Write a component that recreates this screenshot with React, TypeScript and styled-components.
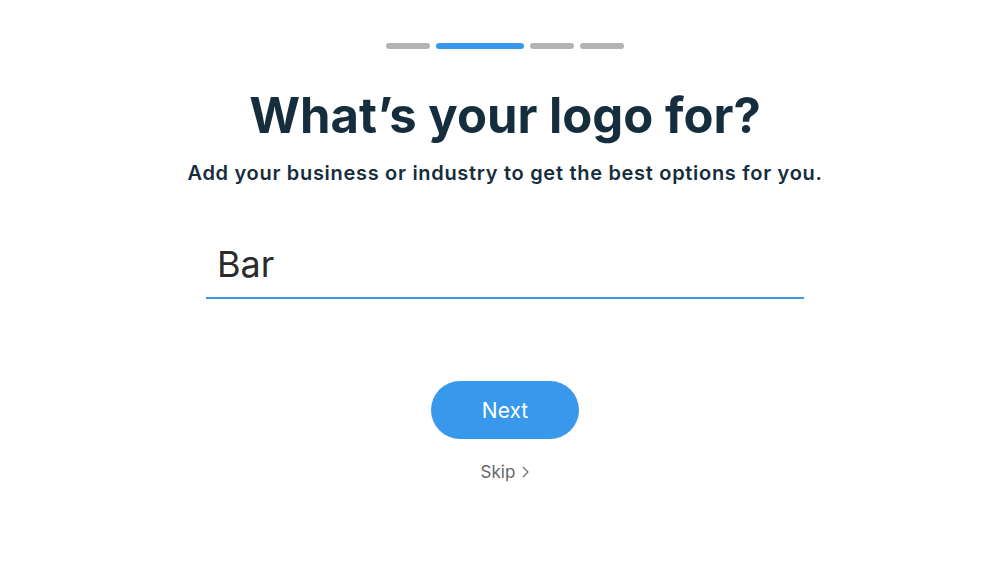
import React, {useState} from 'react'
import styled, {createGlobalStyle} from 'styled-components'

const GlobalStyle = createGlobalStyle`
  html, body {
    margin: 0;
    padding: 0;
    background: #ffffff;
  }
  body {
    font-family: Inter, 'Noto Sans', sans-serif;
  }
`

const Page = styled.div`
  width: 1000px;
  height: 563px;
  display: flex;
  flex-direction: column;
  align-items: center;
  padding: 43px 0 0 10px;
  box-sizing: border-box;
`

const Progress = styled.div`
  display: flex;
  gap: 6px;
`

const Step = styled.div<{$active?: boolean}>`
  width: ${(p) => (p.$active ? 88 : 44)}px;
  height: 6px;
  border-radius: 3px;
  background: ${(p) => (p.$active ? '#3899ec' : '#b3b3b3')};
`

const Title = styled.h1`
  margin: 37px 0 0;
  font-size: 49px;
  line-height: 60px;
  font-weight: 700;
  color: #162d3d;
`

const Subtitle = styled.p`
  margin: 14px 0 0;
  font-size: 20px;
  line-height: 26px;
  font-weight: 600;
  letter-spacing: 0.7px;
  color: #162d3d;
`

const Field = styled.div`
  margin-top: 54px;
  width: 598px;
  border-bottom: 2px solid #3899ec;
  padding: 0 11px 9px;
  box-sizing: border-box;
`

const Input = styled.input`
  width: 100%;
  border: none;
  outline: none;
  padding: 0;
  font-family: Inter, 'Noto Sans', sans-serif;
  font-size: 36px;
  line-height: 48px;
  color: #2b2b2b;
  background: transparent;
`

const NextButton = styled.button`
  margin-top: 82px;
  width: 148px;
  height: 58px;
  border: none;
  border-radius: 29px;
  background: #3899ec;
  color: #ffffff;
  font-family: Inter, 'Noto Sans', sans-serif;
  font-size: 21px;
  cursor: pointer;
`

const SkipLink = styled.a`
  margin-top: 23px;
  display: flex;
  align-items: center;
  gap: 7px;
  font-size: 17px;
  color: #666666;
  cursor: pointer;
`

export default function App() {
  const [value, setValue] = useState('Bar')

  return (
    <>
      <GlobalStyle />
      <Page>
        <Progress>
          <Step />
          <Step $active />
          <Step />
          <Step />
        </Progress>
        <Title>What’s your logo for?</Title>
        <Subtitle>Add your business or industry to get the best options for you.</Subtitle>
        <Field>
          <Input value={value} onChange={(e) => setValue(e.target.value)} />
        </Field>
        <NextButton>Next</NextButton>
        <SkipLink>
          Skip
          <svg width="7" height="12" viewBox="0 0 7 12" fill="none">
            <path d="M1 1l5 5-5 5" stroke="#666666" strokeWidth="1.1" />
          </svg>
        </SkipLink>
      </Page>
    </>
  )
}
